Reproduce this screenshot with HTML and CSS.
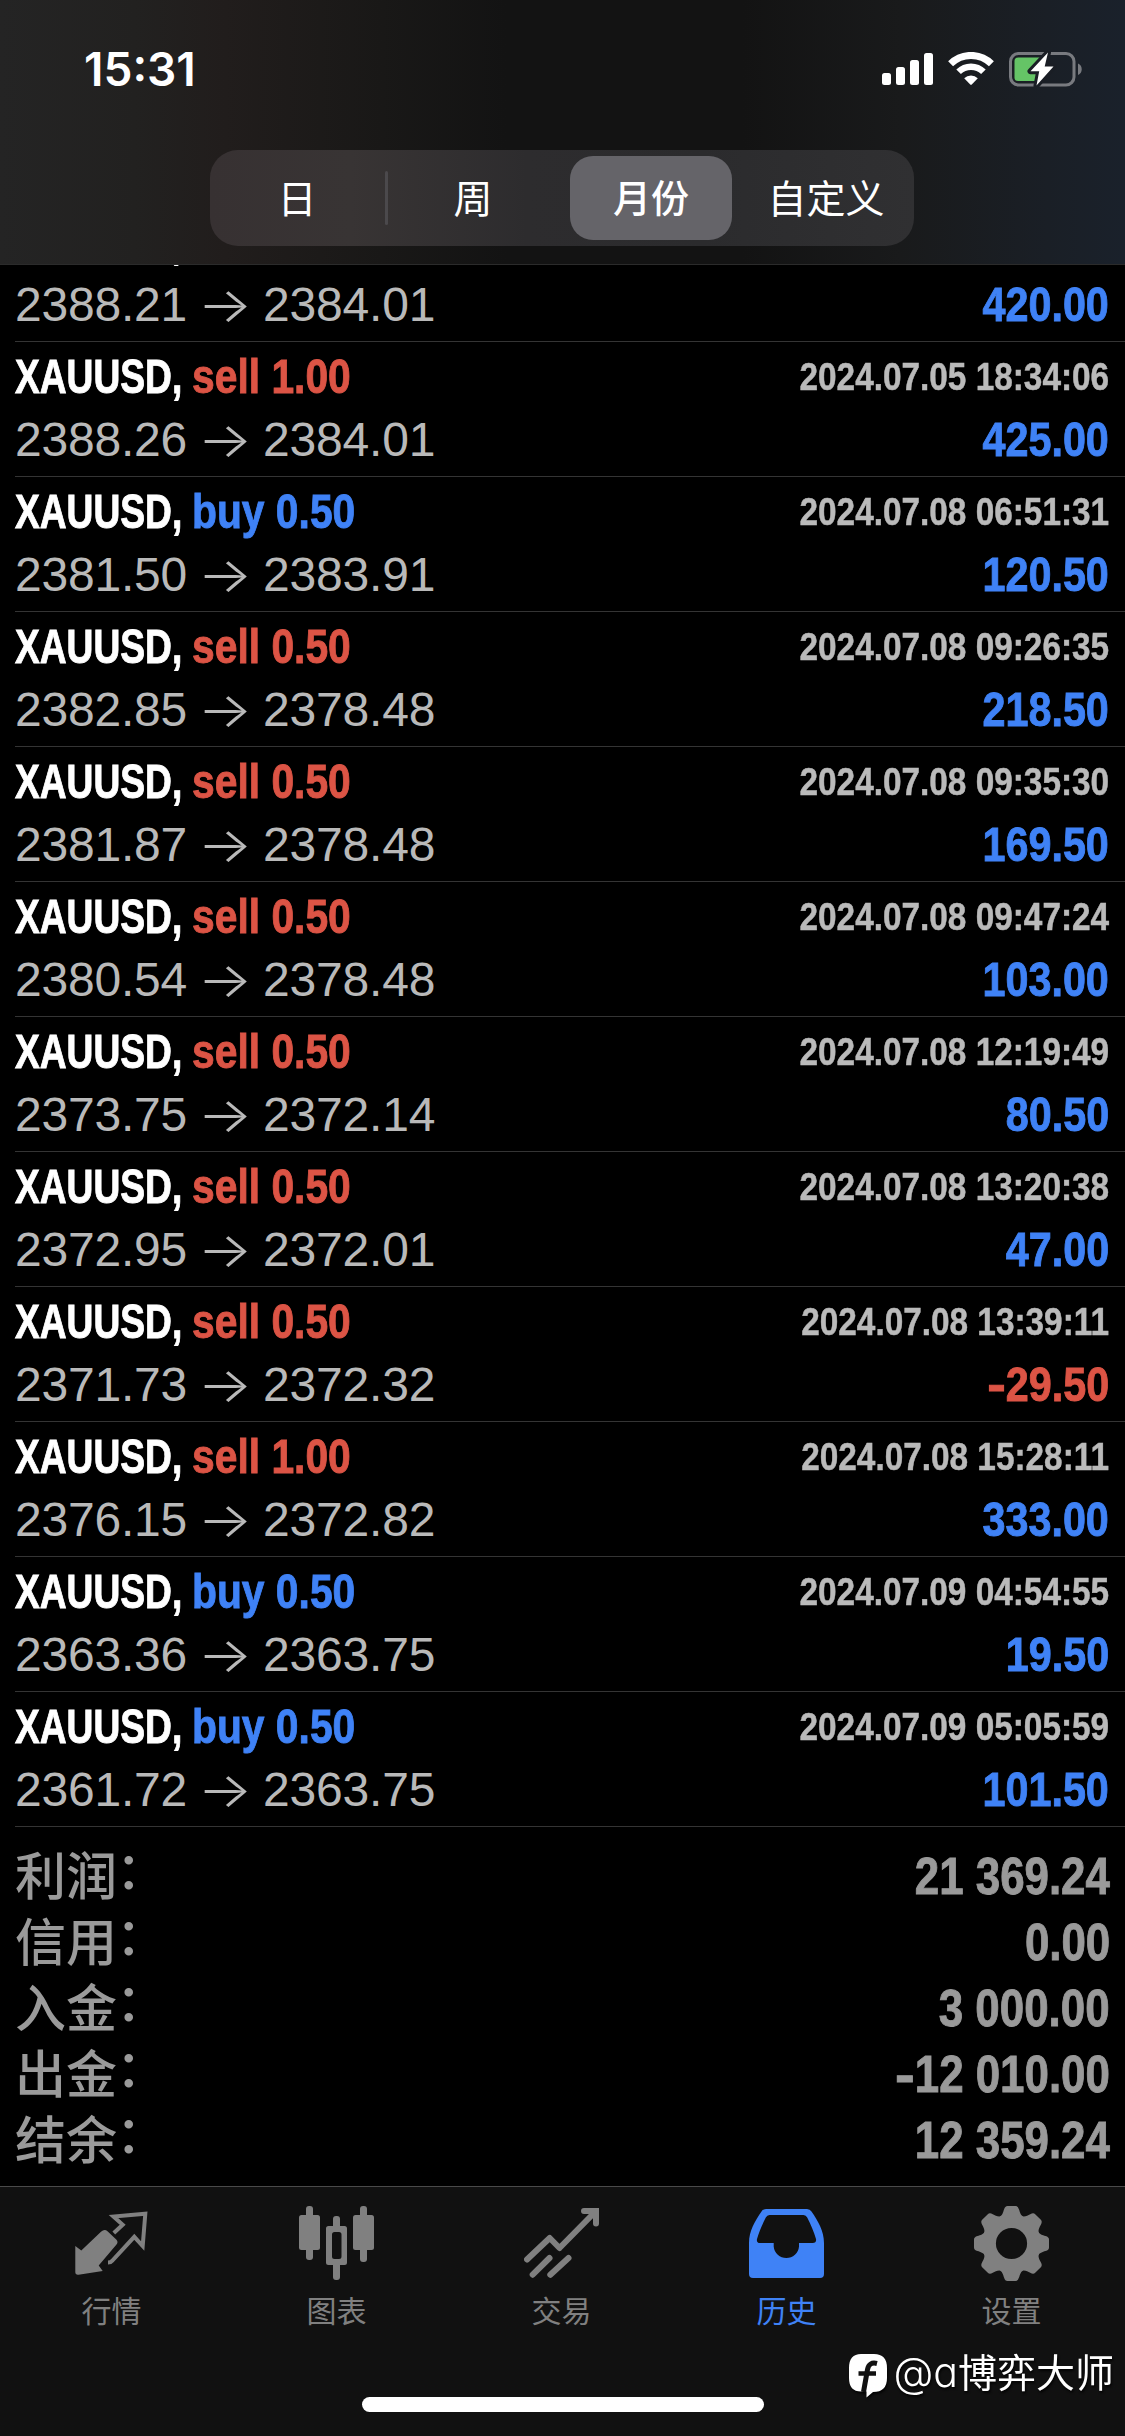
FILE: index.html
```html
<!DOCTYPE html>
<html lang="zh-CN">
<head>
<meta charset="utf-8">
<title>历史</title>
<link rel="stylesheet" href="styles.css">
</head>
<body>
<div class="screen">
  <header class="header">
    <div class="status">
      <span class="clock">15:31</span>
      <div class="status-icons">
        <svg class="signal" width="51" height="34" viewBox="0 0 51 34"><g fill="#fff"><rect x="0" y="21" width="9" height="12" rx="2.5"/><rect x="14" y="15" width="9" height="18" rx="2.5"/><rect x="28" y="8" width="9" height="25" rx="2.5"/><rect x="42" y="1" width="9" height="32" rx="2.5"/></g></svg>
        <svg class="wifi" width="46" height="34" viewBox="0 0 46 34"><g fill="none" stroke="#fff"><path d="M2.6 11.8a29 29 0 0 1 40.8 0" stroke-width="7"/><path d="M10.6 19.8a17.600 17.600 0 0 1 24.800 0" stroke-width="6.500"/></g><path d="M16.200 26.300a9.800 9.800 0 0 1 13.600 0L23.800 32.400q-.8.800-1.600 0z" fill="#fff"/></svg>
        <svg class="battery" width="74" height="36" viewBox="0 0 74 36"><rect x="1.500" y="2.500" width="63.500" height="31.500" rx="8" fill="none" stroke="#787a7f" stroke-width="3"/><path d="M69 12.500c5 2 5 9.500 0 11.500z" fill="#787a7f"/><path d="M9 6.500h24v23.500H9q-3.500 0-3.500-3.500V10q0-3.500 3.500-3.500z" fill="#65c466"/><path d="M39 1.500 21.500 20.300h8.700L27.500 34.500 44.500 15.500h-8.800z" fill="#fff" stroke="#1a1e25" stroke-width="6" stroke-linejoin="round" paint-order="stroke"/></svg>
      </div>
    </div>
    <nav class="segments">
      <span class="segment">日</span>
      <span class="segment segment-line">周</span>
      <span class="segment segment-on">月份</span>
      <span class="segment segment-last">自定义</span>
    </nav>
  </header>

  <main class="list">
    <section class="deal"><div class="line"><span class="symbol">XAUUSD,</span></div><div class="line"><span class="prices">2388.21<i class="arrow">→</i>2384.01</span><span class="value">420.00</span></div></section>
    <section class="deal"><div class="line"><span class="symbol">XAUUSD,</span><span class="side sell">sell 1.00</span><time class="time">2024.07.05 18:34:06</time></div><div class="line"><span class="prices">2388.26<i class="arrow">→</i>2384.01</span><span class="value">425.00</span></div></section>
    <section class="deal"><div class="line"><span class="symbol">XAUUSD,</span><span class="side buy">buy 0.50</span><time class="time">2024.07.08 06:51:31</time></div><div class="line"><span class="prices">2381.50<i class="arrow">→</i>2383.91</span><span class="value">120.50</span></div></section>
    <section class="deal"><div class="line"><span class="symbol">XAUUSD,</span><span class="side sell">sell 0.50</span><time class="time">2024.07.08 09:26:35</time></div><div class="line"><span class="prices">2382.85<i class="arrow">→</i>2378.48</span><span class="value">218.50</span></div></section>
    <section class="deal"><div class="line"><span class="symbol">XAUUSD,</span><span class="side sell">sell 0.50</span><time class="time">2024.07.08 09:35:30</time></div><div class="line"><span class="prices">2381.87<i class="arrow">→</i>2378.48</span><span class="value">169.50</span></div></section>
    <section class="deal"><div class="line"><span class="symbol">XAUUSD,</span><span class="side sell">sell 0.50</span><time class="time">2024.07.08 09:47:24</time></div><div class="line"><span class="prices">2380.54<i class="arrow">→</i>2378.48</span><span class="value">103.00</span></div></section>
    <section class="deal"><div class="line"><span class="symbol">XAUUSD,</span><span class="side sell">sell 0.50</span><time class="time">2024.07.08 12:19:49</time></div><div class="line"><span class="prices">2373.75<i class="arrow">→</i>2372.14</span><span class="value">80.50</span></div></section>
    <section class="deal"><div class="line"><span class="symbol">XAUUSD,</span><span class="side sell">sell 0.50</span><time class="time">2024.07.08 13:20:38</time></div><div class="line"><span class="prices">2372.95<i class="arrow">→</i>2372.01</span><span class="value">47.00</span></div></section>
    <section class="deal"><div class="line"><span class="symbol">XAUUSD,</span><span class="side sell">sell 0.50</span><time class="time">2024.07.08 13:39:11</time></div><div class="line"><span class="prices">2371.73<i class="arrow">→</i>2372.32</span><span class="value loss"><span class="minus">-</span>29.50</span></div></section>
    <section class="deal"><div class="line"><span class="symbol">XAUUSD,</span><span class="side sell">sell 1.00</span><time class="time">2024.07.08 15:28:11</time></div><div class="line"><span class="prices">2376.15<i class="arrow">→</i>2372.82</span><span class="value">333.00</span></div></section>
    <section class="deal"><div class="line"><span class="symbol">XAUUSD,</span><span class="side buy">buy 0.50</span><time class="time">2024.07.09 04:54:55</time></div><div class="line"><span class="prices">2363.36<i class="arrow">→</i>2363.75</span><span class="value">19.50</span></div></section>
    <section class="deal"><div class="line"><span class="symbol">XAUUSD,</span><span class="side buy">buy 0.50</span><time class="time">2024.07.09 05:05:59</time></div><div class="line"><span class="prices">2361.72<i class="arrow">→</i>2363.75</span><span class="value">101.50</span></div></section>

    <section class="summary">
      <div class="total"><span class="label">利润<i class="colon">：</i></span><span class="amount">21 369.24</span></div>
      <div class="total"><span class="label">信用<i class="colon">：</i></span><span class="amount">0.00</span></div>
      <div class="total"><span class="label">入金<i class="colon">：</i></span><span class="amount">3 000.00</span></div>
      <div class="total"><span class="label">出金<i class="colon">：</i></span><span class="amount"><span class="minus">-</span>12 010.00</span></div>
      <div class="total"><span class="label">结余<i class="colon">：</i></span><span class="amount">12 359.24</span></div>
    </section>
  </main>

  <footer class="tabbar">
    <nav class="tabs">
      <a class="tab"><svg width="75" height="75" viewBox="0 0 75 75"><path d="M1.300 40 7.300 44.500 27 25.700Q30.500 22.500 33.500 25.200L42.500 33.800Q44.500 36.200 42.500 38.500L24.700 59.500 28.700 65 4.500 68.700Q1.300 69 1.300 66z" fill="currentColor"/><path d="M39.800 27 48.700 18.700 39.500 10.500 71.300 7.800 68.700 40 60.300 30.800 38.500 54.500Q37 56.500 34 56.500" fill="none" stroke="currentColor" stroke-width="4"/></svg><span>行情</span></a>
      <a class="tab"><svg width="75" height="75" viewBox="0 0 75 75"><g fill="currentColor"><rect x="7" y="0" width="7" height="54" rx="3"/><rect x="0" y="9" width="21" height="35" rx="2.500"/><rect x="61" y="0" width="7" height="56" rx="3"/><rect x="54" y="9" width="21" height="35" rx="2.500"/><rect x="34" y="10" width="7" height="14" rx="3"/><rect x="34" y="55" width="7" height="19" rx="3"/><path fill-rule="evenodd" d="M29.500 20h16q2.500 0 2.500 2.500v34q0 2.500-2.500 2.500h-16q-2.500 0-2.500-2.500v-34q0-2.500 2.500-2.500zM35.500 26q-2.500 0-2.500 2.500v22q0 2.500 2.500 2.500h4.500q2.500 0 2.500-2.500v-22q0-2.500-2.500-2.500z"/></g></svg><span>图表</span></a>
      <a class="tab"><svg width="75" height="75" viewBox="0 0 75 75"><g fill="none" stroke="currentColor" stroke-width="6" stroke-linecap="round" stroke-linejoin="round"><path d="M3 53.500 25.700 32 35.500 42 71 6"/><path d="M60 5H72V17.500" stroke-linejoin="miter"/><path d="M8.700 68.700 25.500 52"/><path d="M26.300 68.700 44.500 52"/></g></svg><span>交易</span></a>
      <a class="tab tab-on"><svg width="75" height="75" viewBox="0 0 75 75"><path fill="currentColor" fill-rule="evenodd" d="M17 3H58Q61 3 62.500 5.500C69 15 75 25 75 37V68Q75 72 71 72H4Q0 72 0 68V37C0 25 6 15 12.500 5.500Q14 3 17 3zM20.500 9Q18 9 16.800 11.500C13 19 10 26 8 33Q7.300 37 11 37H24.700V40.500A12.700 12.700 0 0 0 50 40.500V37H63.700Q67.700 37 67 33C65 26 62 19 58.200 11.500Q57 9 54.500 9z"/></svg><span>历史</span></a>
      <a class="tab"><svg width="75" height="75" viewBox="-37.500 -37.500 75 75"><defs><path id="tooth" d="M-13-26C-9-28-8.500-31-7.500-34Q-6.500-37.500-4-37.500H4Q6.500-37.500 7.500-34C8.500-31 9-28 13-26z"/></defs><g fill="currentColor"><circle r="22.300" fill="none" stroke="currentColor" stroke-width="13.400"/><use href="#tooth"/><use href="#tooth" transform="rotate(45)"/><use href="#tooth" transform="rotate(90)"/><use href="#tooth" transform="rotate(135)"/><use href="#tooth" transform="rotate(180)"/><use href="#tooth" transform="rotate(225)"/><use href="#tooth" transform="rotate(270)"/><use href="#tooth" transform="rotate(315)"/></g></svg><span>设置</span></a>
    </nav>
    <div class="home"></div>
    <div class="watermark">
      <svg width="40" height="46" viewBox="0 0 40 46"><path d="M13 1H26Q39 1 39 15V25Q39 39 25 39L18.500 44.500V38.500H13Q1 38.500 1 25V15Q1 1 13 1z" fill="#fff"/><path d="M29 10.500q-8-2-9.500 6L15.500 39" fill="none" stroke="#111" stroke-width="5"/><path d="M10.500 20.500H28" stroke="#111" stroke-width="4.500"/></svg>
      <span class="handle"><span class="latin">@a</span>博弈大师</span>
    </div>
  </footer>
</div>
</body>
</html>
```
FILE: styles.css
```css
* { box-sizing: border-box; }
body { margin: 0; background: #000; }

.screen {
  width: 1125px;
  height: 2436px;
  display: flex;
  flex-direction: column;
  overflow: hidden;
  background: #000;
  color: #fff;
  font-family: "Liberation Sans", "Noto Sans CJK SC", sans-serif;
}

/* Header */
.header {
  height: 265px;
  flex: none;
  background: linear-gradient(90deg, #242424 0%, #222120 12%, #211d1c 20%, #191817 34%, #131313 45%, #131313 66%, #191a1b 80%, #1a1f26 93%, #1a212b 100%);
  border-bottom: 1px solid #2b2b2b;
}
.status {
  height: 150px;
  padding: 0 42px 0 84px;
  display: flex;
  justify-content: space-between;
}
.clock {
  margin-top: 41px;
  font: 600 46px/56px Inter, sans-serif;
}
.status-icons { display: flex; margin-top: 52px; }
.wifi { margin-left: 15px; }
.battery { margin: -1px 0 0 15px; }

.segments {
  width: 704px;
  height: 96px;
  margin-left: 210px;
  padding: 6px 6px 6px 0;
  display: grid;
  grid-template-columns: 176px 184px 162px 1fr;
  border-radius: 28px;
  background: linear-gradient(90deg, #373132 0%, #383434 20%, #2d2c2e 45%, #2b2b2d 70%, #303032 100%);
}
.segment {
  display: flex;
  align-items: center;
  justify-content: center;
  padding: 0 2px 4px 0;
  font: 400 39px/1 "Noto Sans CJK SC", sans-serif;
}
.segment-line {
  position: relative;
  padding-right: 10px;
}
.segment-line::before {
  content: "";
  position: absolute;
  left: -1px;
  top: 15px;
  width: 3px;
  height: 54px;
  border-radius: 2px;
  background: #4b494c;
}
.segment-on {
  padding-right: 0;
  border-radius: 23px;
  background: #656469;
  font-size: 38px;
  font-weight: 500;
}
.segment-last { padding: 0 0 4px 12px; }

/* Deals */
.list {
  height: 1921px;
  flex: none;
  overflow: hidden;
}
.deal {
  height: 135px;
  margin-left: 15px;
  padding: 3px 16px 0 0;
  border-bottom: 1px solid #343434;
}
.deal:first-child { margin-top: -58px; }
.line {
  height: 63px;
  display: flex;
  align-items: center;
  white-space: nowrap;
  font-size: 48px;
  line-height: 63px;
}
.symbol {
  width: 177px;
  font-weight: 700;
  -webkit-text-stroke: .9px currentColor;
  transform: scaleX(.774);
  transform-origin: left;
}
.side {
  font-weight: 700;
  -webkit-text-stroke: .9px currentColor;
  transform: scaleX(.85);
  transform-origin: left;
}
.sell { color: #dc5445; }
.buy { color: #3f82f6; }
.time {
  margin-left: auto;
  font-size: 39px;
  font-weight: 700;
  color: #bababa;
  -webkit-text-stroke: .5px currentColor;
  transform: scaleX(.855);
  transform-origin: right;
}
.prices {
  display: flex;
  color: #b9b9b9;
  letter-spacing: -.2px;
}
.arrow {
  width: 76px;
  text-align: center;
  font: 300 48px/63px Inter, sans-serif;
  transform: scaleX(1.2);
}
.value {
  margin-left: auto;
  font-weight: 700;
  color: #3f82f6;
  -webkit-text-stroke: .9px currentColor;
  transform: scaleX(.86);
  transform-origin: right;
}
.value.loss { color: #dc5445; }
.minus {
  display: inline-block;
  transform: scaleX(1.35);
  transform-origin: right;
}

/* Totals */
.summary { padding: 16px 15px 0; }
.total {
  height: 66px;
  display: flex;
  justify-content: space-between;
  color: #9a9a9a;
}
.label {
  margin-top: -3px;
  font: 500 51px/66px "Noto Sans CJK SC", sans-serif;
}
.colon {
  display: inline-block;
  font-style: normal;
  transform: translate(-1px, -6px);
}
.amount {
  margin-top: 1px;
  font: 700 51px/66px "Liberation Sans", sans-serif;
  -webkit-text-stroke: .9px currentColor;
  transform: scaleX(.86);
  transform-origin: right;
}

/* Tab bar */
.tabbar {
  position: relative;
  height: 250px;
  flex: none;
  border-top: 1px solid #4a4a4a;
  background: #111;
}
.tabs {
  display: grid;
  grid-template-columns: repeat(5, 225px);
  margin-left: -1px;
  padding-top: 19px;
}
.tab {
  display: flex;
  flex-direction: column;
  align-items: center;
  gap: 7px;
  color: #808080;
  font: 400 30px/42px "Noto Sans CJK SC", sans-serif;
}
.tab-on { color: #3f82f6; }
.home {
  width: 402px;
  height: 15px;
  margin: 67px 0 0 362px;
  border-radius: 8px;
  background: #fff;
}
.watermark {
  position: absolute;
  right: 11px;
  top: 156px;
  display: flex;
  align-items: center;
  gap: 5px;
  filter: drop-shadow(1px 2px 1px rgba(0, 0, 0, .8));
}
.watermark svg { margin-top: 10px; }
.handle {
  white-space: nowrap;
  font: 400 39px/50px "Noto Sans CJK SC", sans-serif;
}
.latin {
  font-family: Inter, sans-serif;
  font-size: 41px;
  font-weight: 300;
  font-feature-settings: "cv11";
}
```
